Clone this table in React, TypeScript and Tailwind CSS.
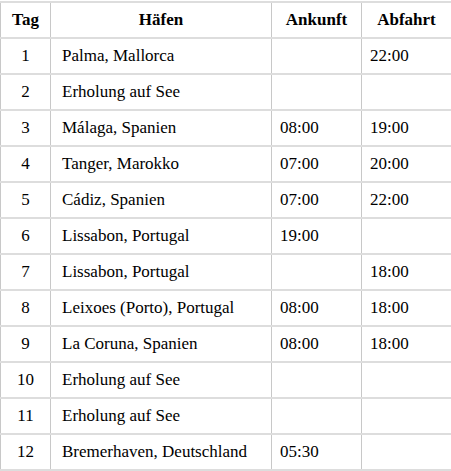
import React from 'react';

const rows = [
  { tag: '1', hafen: 'Palma, Mallorca', an: '', ab: '22:00' },
  { tag: '2', hafen: 'Erholung auf See', an: '', ab: '' },
  { tag: '3', hafen: 'Málaga, Spanien', an: '08:00', ab: '19:00' },
  { tag: '4', hafen: 'Tanger, Marokko', an: '07:00', ab: '20:00' },
  { tag: '5', hafen: 'Cádiz, Spanien', an: '07:00', ab: '22:00' },
  { tag: '6', hafen: 'Lissabon, Portugal', an: '19:00', ab: '' },
  { tag: '7', hafen: 'Lissabon, Portugal', an: '', ab: '18:00' },
  { tag: '8', hafen: 'Leixoes (Porto), Portugal', an: '08:00', ab: '18:00' },
  { tag: '9', hafen: 'La Coruna, Spanien', an: '08:00', ab: '18:00' },
  { tag: '10', hafen: 'Erholung auf See', an: '', ab: '' },
  { tag: '11', hafen: 'Erholung auf See', an: '', ab: '' },
  { tag: '12', hafen: 'Bremerhaven, Deutschland', an: '05:30', ab: '' },
];

const cell = 'border-x border-x-[#c8c8c8] border-y-2 border-y-[#dddddd] h-[36px] align-middle leading-[20px]';

const App: React.FC = () => {
  return (
    <div className="bg-white w-[451px] h-[471px] pt-px">
      <table
        className="table-fixed border-collapse w-[451px] text-[17px] text-black"
        style={{ fontFamily: '"Liberation Serif", "Times New Roman", serif' }}
      >
        <colgroup>
          <col className="w-[50px]" />
          <col className="w-[221px]" />
          <col className="w-[90px]" />
          <col className="w-[90px]" />
        </colgroup>
        <thead>
          <tr>
            <th className={`${cell} font-bold text-center`}>Tag</th>
            <th className={`${cell} font-bold text-center`}>Häfen</th>
            <th className={`${cell} font-bold text-center`}>Ankunft</th>
            <th className={`${cell} font-bold text-center`}>Abfahrt</th>
          </tr>
        </thead>
        <tbody>
          {rows.map((r) => (
            <tr key={r.tag}>
              <td className={`${cell} text-center`}>{r.tag}</td>
              <td className={`${cell} pl-[11px]`}>{r.hafen}</td>
              <td className={`${cell} pl-[8px]`}>{r.an}</td>
              <td className={`${cell} pl-[8px]`}>{r.ab}</td>
            </tr>
          ))}
        </tbody>
      </table>
    </div>
  );
};

export default App;
